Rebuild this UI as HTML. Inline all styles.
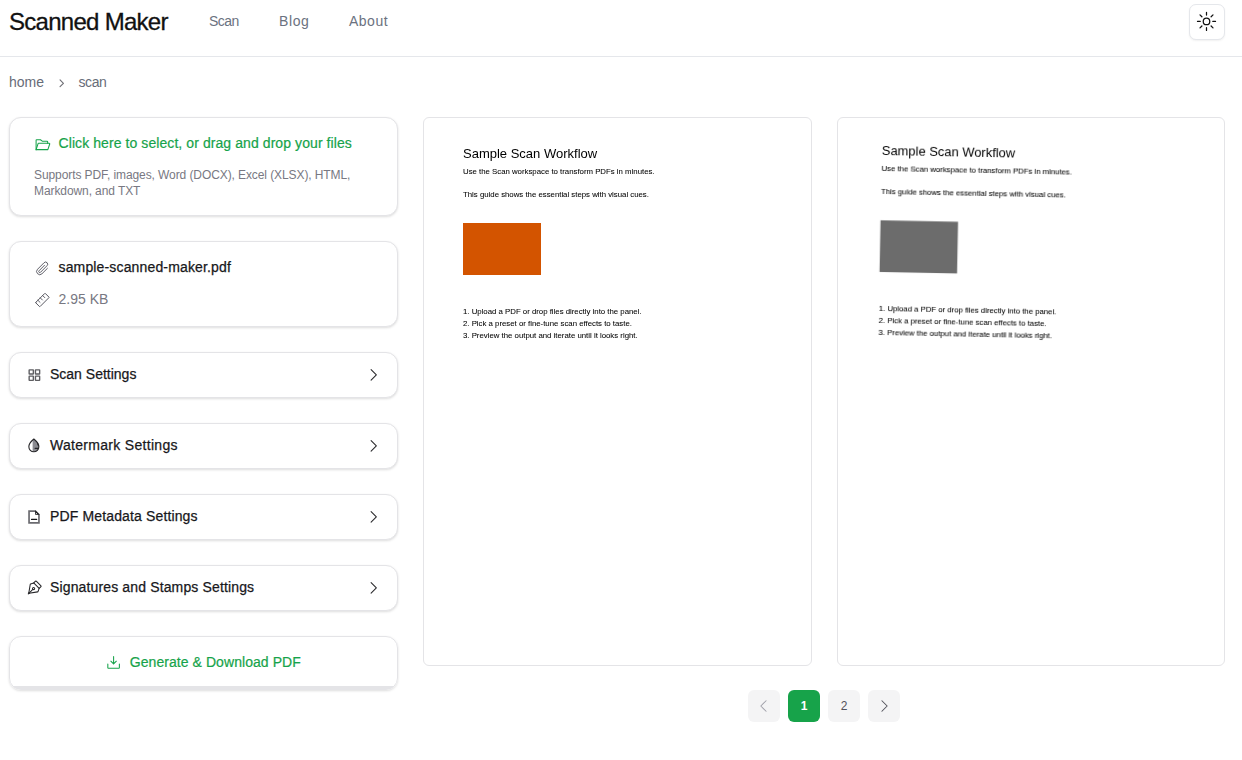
<!DOCTYPE html>
<html lang="en">
<head>
<meta charset="utf-8">
<title>Scanned Maker</title>
<style>
*{box-sizing:border-box;margin:0;padding:0}
html,body{width:1242px;height:760px;overflow:hidden;background:#fff}
body{font-family:"Liberation Sans",sans-serif;color:#18181b;position:relative;font-size:14px}
.abs{position:absolute;white-space:nowrap;line-height:20px}
svg{position:absolute;overflow:visible}
.ph{fill:none;stroke:currentColor;stroke-width:16;stroke-linecap:round;stroke-linejoin:round}
header{position:absolute;left:0;top:0;width:1242px;height:57px;border-bottom:1px solid #e5e7eb}
.brand{left:9px;top:9.5px;font-size:24px;line-height:24px;color:#111;letter-spacing:-0.72px;-webkit-text-stroke:.3px currentColor}
nav a{color:#6b7280;text-decoration:none;font-size:14px}
.theme{position:absolute;left:1189px;top:4px;width:36px;height:36px;border:1px solid #e5e7eb;border-radius:7px;background:#fff;box-shadow:0 1px 2px rgba(0,0,0,.06)}
.crumb{color:#676c78;font-size:14px}
.card{position:absolute;left:9px;width:389px;background:#fff;border:1px solid #e4e4e7;border-radius:12px;box-shadow:0 1px 3px rgba(0,0,0,.09),0 1px 2px rgba(0,0,0,.05)}
.green{color:#16a34a}
.muted{color:#787882}
.row .abs{font-size:14px;-webkit-text-stroke:.25px currentColor}
.panel{position:absolute;top:117px;width:389px;height:549px;border:1px solid #e4e4e7;border-radius:6px;background:#fff;overflow:hidden}
.page{position:absolute;left:0;top:0;width:387px;height:547px;font-family:"Liberation Sans",sans-serif;color:#000;-webkit-text-stroke:0.06px #000}
.pg{position:absolute;top:690px;width:32px;height:32px;border-radius:6px;background:#f4f4f5;color:#52525b;font-size:12px;text-align:center;line-height:32px}
</style>
</head>
<body>
<header>
  <div class="abs brand">Scanned Maker</div>
  <nav>
    <a class="abs" style="left:209px;top:11px;letter-spacing:-0.5px">Scan</a>
    <a class="abs" style="left:279px;top:11px;letter-spacing:0.6px">Blog</a>
    <a class="abs" style="left:349px;top:11px;letter-spacing:0.5px">About</a>
  </nav>
  <div class="theme">
    <svg fill="none" stroke="#111" stroke-width="1.25" stroke-linecap="round" viewBox="-0.50 -0.40 25.00 25.00" width="25" height="25" style="left:4px;top:4px">
      <circle cx="12" cy="12" r="3.25"/>
      <path d="M12 3v2.7M12 18.3V21M3 12h2.7M18.3 12H21M5.5 5.5l1.9 1.9M16.6 16.6l1.9 1.9M18.5 5.5l-1.9 1.9M7.4 16.6l-1.9 1.9"/>
    </svg>
  </div>
</header>

<div class="abs crumb" style="left:9px;top:72px">home</div>
<svg class="ph" viewBox="-0.00 -21.33 284.44 284.44" width="12" height="12" style="left:56px;top:77px;color:#707076;stroke-width:27"><path d="M96 48l80 80-80 80"/></svg>
<div class="abs crumb" style="left:78.5px;top:72px;letter-spacing:-0.4px">scan</div>

<!-- upload card -->
<section class="card" style="top:117px;height:99px">
  <svg class="ph green" viewBox="-0.00 -0.00 274.29 274.29" width="18" height="18" style="left:24px;top:18px"><path d="M32 208V64a8 8 0 0 1 8-8h53.33a8 8 0 0 1 4.8 1.6l27.74 20.8a8 8 0 0 0 4.8 1.6H200a8 8 0 0 1 8 8v24"/><path d="M32 208l30.18-90.53A8 8 0 0 1 69.77 112H232a8 8 0 0 1 7.59 10.53L211.09 208Z"/></svg>
  <div class="abs green" style="left:48.5px;top:15.4px;letter-spacing:0.08px;-webkit-text-stroke:.2px currentColor">Click here to select, or drag and drop your files</div>
  <div class="abs muted" style="left:24px;top:49px;font-size:12px;line-height:16px;letter-spacing:-0.09px">Supports PDF, images, Word (DOCX), Excel (XLSX), HTML,<br>Markdown, and TXT</div>
</section>

<!-- file card -->
<section class="card" style="top:241px;height:86px">
  <svg class="ph" viewBox="-0.00 -0.00 274.29 274.29" width="18" height="18" style="left:24px;top:18px;color:#52525b;stroke-width:14"><path d="M160 80l-83.31 84.69a16 16 0 0 0 22.63 22.62L198.63 86.63a32 32 0 0 0-45.26-45.26L54.06 141.38a48 48 0 0 0 67.88 67.88L204 128"/></svg>
  <div class="abs" style="left:48.5px;top:15px;letter-spacing:0.15px;-webkit-text-stroke:.25px currentColor">sample-scanned-maker.pdf</div>
  <svg class="ph" viewBox="-0.00 -9.14 274.29 274.29" width="18" height="18" style="left:24px;top:49px;color:#52525b;stroke-width:14"><rect x="26.18" y="82.75" width="203.65" height="90.51" rx="8" transform="rotate(-45 128 128)"/><path d="M132 60l32 32M96 96l32 32M60 132l32 32"/></svg>
  <div class="abs muted" style="left:48.5px;top:47px">2.95 KB</div>
</section>

<!-- settings rows -->
<section class="card row" style="top:352px;height:46px">
  <svg class="ph" viewBox="-0.00 -10.67 274.29 274.29" width="18" height="18" style="left:16px;top:13px;color:#5e5e62;stroke-width:21"><rect x="48" y="48" width="64" height="64" rx="4"/><rect x="144" y="48" width="64" height="64" rx="4"/><rect x="48" y="144" width="64" height="64" rx="4"/><rect x="144" y="144" width="64" height="64" rx="4"/></svg>
  <div class="abs" style="left:40px;top:11px">Scan Settings</div>
  <svg class="ph" viewBox="-12.19 -7.62 274.29 274.29" width="18" height="18" style="left:354px;top:13px;color:#27272a"><path d="M96 48l80 80-80 80"/></svg>
</section>
<section class="card row" style="top:423px;height:46px">
  <svg fill="none" stroke="#27272a" stroke-width="1.1" stroke-linecap="round" stroke-linejoin="round" viewBox="-0.60 -0.80 19.00 19.00" width="19" height="19" style="left:15px;top:11px"><path d="M7.05 4.1L8.25 3.2C10.45 5 13.25 7.8 13.25 11a5 5 0 0 1-6.2 4.85Z" fill="#8b8b91" stroke="none"/><path d="M8.25 3.2C10.45 5 13.25 7.8 13.25 11a5 5 0 0 1-10 0C3.25 7.800 6.05 5 8.25 3.200Z"/><path d="M9.6 12.6h3M11.9 7.400l.9 2.200" stroke-width="1.2"/></svg>
  <div class="abs" style="left:40px;top:11px;letter-spacing:0.3px">Watermark Settings</div>
  <svg class="ph" viewBox="-12.19 -7.62 274.29 274.29" width="18" height="18" style="left:354px;top:13px;color:#27272a"><path d="M96 48l80 80-80 80"/></svg>
</section>
<section class="card row" style="top:494px;height:46px">
  <svg fill="none" stroke="#6b6b70" stroke-width="1.7" stroke-linejoin="miter" viewBox="-0.00 -0.00 19.00 19.00" width="19" height="19" style="left:16px;top:13px"><path d="M3.05 3.050H9.400L12.950 6.700V14.850H3.050Z"/><path d="M9.200 2.200V6.700H13.700Z" fill="#18181b" stroke="none"/><circle cx="10.500" cy="5.400" r=".5" fill="#fff" stroke="none"/><path d="M5.500 11.400H10.700" stroke="#18181b" stroke-width="1.100" stroke-linecap="round"/></svg>
  <div class="abs" style="left:40px;top:11px;letter-spacing:0.14px">PDF Metadata Settings</div>
  <svg class="ph" viewBox="-12.19 -7.62 274.29 274.29" width="18" height="18" style="left:354px;top:13px;color:#27272a"><path d="M96 48l80 80-80 80"/></svg>
</section>
<section class="card row" style="top:565px;height:46px">
  <svg class="ph" viewBox="-4.86 -0.00 275.44 275.44" width="17" height="17" style="left:16px;top:14px;color:#27272a;stroke-width:17"><path d="M32 224l70-70"/><path d="M30 226l6-34 28 28Z" fill="currentColor" stroke="none"/><path d="M43.42 215.76l139.86-23.31a8 8 0 0 0 6.3-5.23L208 136l-88-88-51.19 18.42a8 8 0 0 0-5.23 6.3L40.24 212.58"/><path d="M208 136l29.66-29.66a8 8 0 0 0 0-11.31l-76.69-76.69a8 8 0 0 0-11.31 0L120 48"/><circle cx="118" cy="138" r="18"/></svg>
  <div class="abs" style="left:40px;top:11px;letter-spacing:0.14px">Signatures and Stamps Settings</div>
  <svg class="ph" viewBox="-12.19 -7.62 274.29 274.29" width="18" height="18" style="left:354px;top:13px;color:#27272a"><path d="M96 48l80 80-80 80"/></svg>
</section>

<!-- generate button -->
<section class="card" style="top:636px;height:54px;background:linear-gradient(to top,#e4e4e7 3.5px,#fff 3.5px)">
  <svg class="ph green" viewBox="-3.05 -0.00 274.29 274.29" width="18" height="18" style="left:95px;top:17px"><path d="M128 40v112M86 110l42 42 42-42"/><path d="M216 152v56a8 8 0 0 1-8 8H48a8 8 0 0 1-8-8v-56"/></svg>
  <div class="abs green" style="left:119.8px;top:15.3px;letter-spacing:0.06px;-webkit-text-stroke:.2px currentColor">Generate &amp; Download PDF</div>
</section>

<!-- preview original -->
<section class="panel" style="left:423px">
  <div class="page" style="filter:blur(0.3px)">
    <div class="abs" style="left:39px;top:26px;font-size:13px;line-height:20px;-webkit-text-stroke:0">Sample Scan Workflow</div>
    <div class="abs" style="left:39px;top:48.1px;font-size:7.8px;line-height:12px;letter-spacing:0px">Use the Scan workspace to transform PDFs in minutes.</div>
    <div class="abs" style="left:39px;top:71.1px;font-size:7.8px;line-height:12px">This guide shows the essential steps with visual cues.</div>
    <div style="position:absolute;left:39px;top:105px;width:78px;height:52px;background:#d35400"></div>
    <div class="abs" style="left:39px;top:187.9px;font-size:7.8px;line-height:12px">1. Upload a PDF or drop files directly into the panel.<br>2. Pick a preset or fine-tune scan effects to taste.<br>3. Preview the output and iterate until it looks right.</div>
  </div>
</section>

<!-- preview scanned -->
<section class="panel" style="left:837px;width:388px">
  <div class="page" style="filter:blur(0.3px);-webkit-text-stroke:0.06px #000;transform:translate(5.8px,-2.8px) rotate(1.1deg) scale(0.994);transform-origin:0 0">
    <div class="abs" style="left:39px;top:25.4px;font-size:13px;line-height:20px;-webkit-text-stroke:0">Sample Scan Workflow</div>
    <div class="abs" style="left:39px;top:47.2px;font-size:7.8px;line-height:12px">Use the Scan workspace to transform PDFs in minutes.</div>
    <div class="abs" style="left:39px;top:70.1px;font-size:7.8px;line-height:12px">This guide shows the essential steps with visual cues.</div>
    <div style="position:absolute;left:39px;top:105px;width:78px;height:52px;background:#6c6c6c"></div>
    <div class="abs" style="left:39px;top:187.9px;font-size:7.8px;line-height:12px">1. Upload a PDF or drop files directly into the panel.<br>2. Pick a preset or fine-tune scan effects to taste.<br>3. Preview the output and iterate until it looks right.</div>
  </div>
</section>

<!-- pagination -->
<div class="pg" style="left:748px"><svg class="ph" viewBox="-9.14 -9.14 274.29 274.29" width="18" height="18" style="left:7px;top:7px;color:#a1a1aa"><path d="M160 48l-80 80 80 80"/></svg></div>
<div class="pg" style="left:788px;background:#17a34a;color:#fff;font-weight:700">1</div>
<div class="pg" style="left:828px">2</div>
<div class="pg" style="left:868px"><svg class="ph" viewBox="-9.14 -9.14 274.29 274.29" width="18" height="18" style="left:7px;top:7px;color:#52525b"><path d="M96 48l80 80-80 80"/></svg></div>
</body>
</html>
